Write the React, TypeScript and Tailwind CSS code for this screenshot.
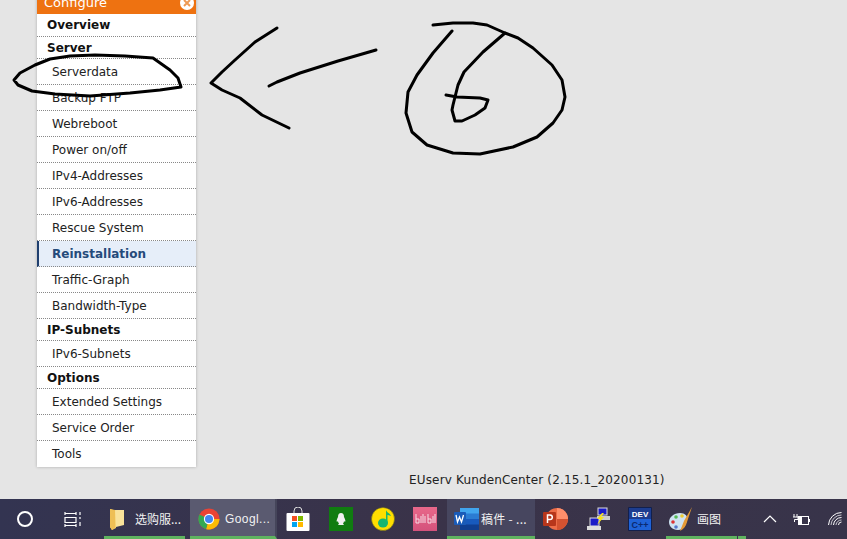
import React from "react";

const font = { fontFamily: '"DejaVu Sans", Verdana, sans-serif' };

function Head({ label, h }: { label: string; h: string }) {
  return (
    <div className={`${h} border-b border-dotted border-[#888] pl-[10px] flex items-center text-[12px] leading-none font-bold text-[#111]`}>
      {label}
    </div>
  );
}

function Item({ label, active, last }: { label: string; active?: boolean; last?: boolean }) {
  return (
    <div
      className={`h-[26px] flex items-center text-[12px] leading-none ${last ? "" : "border-b border-dotted border-[#888]"} ${
        active ? "bg-[#e6eef9] font-bold text-[#254a7a] border-l-2 [border-left-style:solid] border-l-[#1f3f6e] pl-[13px]" : "pl-[15px] text-[#222]"
      }`}
    >
      {label}
    </div>
  );
}

function Sidebar() {
  return (
    <div className="ml-[37px] w-[159px] -mt-[8px] bg-white shadow-[0_0_3px_rgba(0,0,0,0.25)] self-start">
      <div className="h-[22px] bg-[#ee7211] flex items-center justify-between pl-[7px] pr-[2px] text-white text-[13px]">
        <span>Configure</span>
        <span className="w-[14px] h-[14px] rounded-full bg-white text-[#ee7211] flex items-center justify-center">
          <svg width="8" height="8" viewBox="0 0 8 8"><path d="M1 1l6 6M7 1L1 7" stroke="#ee9a55" strokeWidth="2" /></svg>
        </span>
      </div>
      <Head label="Overview" h="h-[23px]" />
      <Head label="Server" h="h-[22px]" />
      <Item label="Serverdata" />
      <Item label="Backup FTP" />
      <Item label="Webreboot" />
      <Item label="Power on/off" />
      <Item label="IPv4-Addresses" />
      <Item label="IPv6-Addresses" />
      <Item label="Rescue System" />
      <Item label="Reinstallation" active />
      <Item label="Traffic-Graph" />
      <Item label="Bandwidth-Type" />
      <Head label="IP-Subnets" h="h-[22px]" />
      <Item label="IPv6-Subnets" />
      <Head label="Options" h="h-[22px]" />
      <Item label="Extended Settings" />
      <Item label="Service Order" />
      <Item label="Tools" last />
    </div>
  );
}

function Drawing() {
  const s = { fill: "none", stroke: "#000", strokeWidth: 3, strokeLinejoin: "round" as const, strokeLinecap: "round" as const };
  return (
    <svg className="absolute left-0 top-0 pointer-events-none" width="847" height="499" viewBox="0 0 847 499">
      <polyline {...s} points="181,87 178,78 170,70 153,58 125,56 95,55 70,56 50,59 35,65 20,73 14,80 18,85 32,91 55,94 90,96 130,93 160,90 181,87" />
      <polyline {...s} points="277,28 255,42 235,60 222,72 211,83 222,90 240,98 262,115 289,128" />
      <polyline {...s} points="269,86 277,82 300,73 338,61 376,50" />
      <polyline {...s} points="433,25 453,23 473,23 487,25 505,33 518,38 533,48 552,65 562,80 565,97 562,110 553,123 537,137 513,147 480,154 453,153 427,145 412,132 406,113 408,92 417,75 433,53 452,31" />
      <polyline {...s} points="505,33 483,52 464,72 458,85 453,105 452,110 455,121 462,121 475,115 485,108 488,100 480,98 457,97 446,95" />
    </svg>
  );
}

function Folder() {
  return (
    <svg width="14" height="21" viewBox="0 0 14 21" className="shrink-0">
      <path d="M0 0l6 2v17l-4 2-2-3z" fill="#f5d06a" />
      <path d="M5 1h9v15l-8 2z" fill="#f9e29a" />
      <path d="M0 0l5 1v18l-3 2-2-3z" fill="#eebf55" />
    </svg>
  );
}

function Chrome() {
  return (
    <svg width="22" height="22" viewBox="0 0 24 24">
      <circle cx="12" cy="12" r="11.5" fill="#ea4335" />
      <path d="M12 12L1.5 7A11.5 11.5 0 0 0 9 23.1z" fill="#34a853" />
      <path d="M12 12h11.4A11.5 11.5 0 0 1 9 23.1z" fill="#fbbc05" />
      <circle cx="12" cy="12" r="5.6" fill="#fff" />
      <circle cx="12" cy="12" r="4.4" fill="#4285f4" />
    </svg>
  );
}

function Store() {
  return (
    <svg width="24" height="24" viewBox="0 0 24 24">
      <path d="M8 7V4a4 4 0 0 1 8 0v3" fill="none" stroke="#ddd" strokeWidth="1" />
      <rect x="0.5" y="6" width="23" height="18" rx="1" fill="#fff" />
      <rect x="6" y="9" width="5" height="5" fill="#f25022" />
      <rect x="12" y="9" width="5" height="5" fill="#7fba00" />
      <rect x="6" y="15" width="5" height="5" fill="#00a4ef" />
      <rect x="12" y="15" width="5" height="5" fill="#ffb900" />
    </svg>
  );
}

function QQ() {
  return (
    <div className="w-[24px] h-[24px] bg-[#107c10] flex items-center justify-center">
      <svg width="10" height="12" viewBox="0 0 10 12">
        <path d="M5 0c2 0 3 1.5 3 4 1 2 2 4 1 5l-1-1c0 1-.5 2-1 2.500L8 12H2l1-1.500C2.500 10 2 9 2 8L1 9C0 8 1 6 2 4c0-2.500 1-4 3-4z" fill="#f0f0f0" />
      </svg>
    </div>
  );
}

function QQMusic() {
  return (
    <svg width="24" height="24" viewBox="0 0 24 24">
      <circle cx="12" cy="12" r="11.500" fill="#ffde00" stroke="#6b6a20" strokeWidth="0.6" />
      <ellipse cx="12" cy="16" rx="5" ry="4.500" fill="#18b56f" />
      <path d="M15 16V3c1 3 4 3 5 6-2-1-3-1-3.500-1V16z" fill="#18b56f" />
    </svg>
  );
}

function Bili() {
  return (
    <div className="w-[24px] h-[24px] bg-gradient-to-b from-[#e8688a] to-[#d4527c] flex items-center justify-center overflow-hidden">
      <svg width="22" height="12" viewBox="0 0 22 12" fill="none" stroke="#f7dce4" strokeWidth="1">
        <path d="M2 1v9h3V6H2M7 3v7M9 1v9M11 3v7M14 1v9h3V6h-3M19 3v7M21 1v9" />
      </svg>
    </div>
  );
}

function Word() {
  return (
    <svg width="25" height="22" viewBox="0 0 25 22" className="shrink-0">
      <rect x="6" y="0" width="19" height="6" fill="#41a5ee" />
      <rect x="6" y="5.500" width="19" height="6" fill="#2b7cd3" />
      <rect x="6" y="11" width="19" height="6" fill="#185abd" />
      <rect x="6" y="16.500" width="19" height="5.500" fill="#103f91" />
      <rect x="0" y="4" width="12" height="13" rx="1" fill="#1a5bb8" />
      <path d="M2 7l1.500 7 2-5 2 5L9.500 7" fill="none" stroke="#fff" strokeWidth="1.300" />
    </svg>
  );
}

function Ppt() {
  return (
    <svg width="25" height="24" viewBox="0 0 25 24">
      <circle cx="14" cy="12" r="11" fill="#ed6c47" />
      <path d="M14 1a11 11 0 0 1 11 11H14z" fill="#ff8f6b" />
      <path d="M14 12h11a11 11 0 0 1-11 11z" fill="#d35230" />
      <rect x="0" y="5" width="13" height="14" rx="1" fill="#b7361b" />
      <path d="M4.500 16V8h2.500a2.200 2.200 0 0 1 0 4.600H4.500" fill="none" stroke="#fff" strokeWidth="1.500" />
    </svg>
  );
}

function Net() {
  return (
    <svg width="24" height="24" viewBox="0 0 24 24">
      <rect x="11" y="1" width="9" height="7" fill="#1a1ac8" stroke="#ddd" />
      <rect x="10" y="9" width="13" height="4" fill="#ccc" />
      <rect x="3" y="11" width="9" height="8" fill="#1a1ac8" stroke="#ddd" />
      <rect x="0" y="19" width="14" height="4" fill="#ddd" />
      <path d="M15 6l-5 6h3l-3 6 7-8h-3l3-4z" fill="#f5e11e" />
    </svg>
  );
}

function Dev() {
  return (
    <svg width="24" height="24" viewBox="0 0 24 24">
      <rect width="24" height="24" rx="1" fill="#12204d" />
      <rect x="1" y="1" width="22" height="11" fill="#1d3d8f" />
      <rect x="1" y="12" width="22" height="11" fill="#1f63d8" />
      <text x="12" y="10" textAnchor="middle" fontSize="8" fontWeight="700" fill="#fff" style={{ fontFamily: '"Liberation Sans", sans-serif' }}>DEV</text>
      <text x="12" y="21" textAnchor="middle" fontSize="9" fontWeight="700" fill="#0b2a70" style={{ fontFamily: '"Liberation Sans", sans-serif' }}>C++</text>
    </svg>
  );
}

function Paint() {
  return (
    <svg width="24" height="24" viewBox="0 0 24 24" className="shrink-0">
      <path d="M0 15c0-5 5-9 11-9 5 0 8 3 7 7s-3 10-9 10-9-4-9-8z" fill="#cfe3f2" />
      <circle cx="4" cy="15" r="1.800" fill="#d33" />
      <circle cx="7" cy="10" r="1.800" fill="#5b5" />
      <circle cx="13" cy="9" r="1.800" fill="#ec3" />
      <circle cx="7" cy="20" r="1.800" fill="#57c" />
      <path d="M23 0L15 14l-4 10c4-2 6-5 7-9z" fill="#e59a35" />
    </svg>
  );
}

function Chevron() {
  return (
    <svg width="14" height="8" viewBox="0 0 14 8"><path d="M1 7l6-6 6 6" fill="none" stroke="#fff" strokeWidth="1.200" /></svg>
  );
}

function Battery() {
  return (
    <svg width="17" height="13" viewBox="0 0 17 13" fill="none" stroke="#fff" strokeWidth="1">
      <rect x="5.500" y="3.500" width="10" height="8" />
      <rect x="16" y="6" width="1" height="3" fill="#fff" stroke="none" />
      <rect x="6" y="4" width="3" height="7" fill="#fff" stroke="none" />
      <path d="M1 1v3M4 1v3M0 4h5v2.500H1.500V9" />
    </svg>
  );
}

function Wifi() {
  return (
    <svg width="14" height="14" viewBox="0 0 14 14" fill="none" stroke="#fff" strokeWidth="1">
      <path d="M0.500 13a13 13 0 0 1 13-12.500" />
      <path d="M3 13a10.500 10.500 0 0 1 10.500-10" opacity="0.7" />
      <path d="M5.500 13a8 8 0 0 1 8-7.500" />
      <path d="M8 13a5.500 5.500 0 0 1 5.500-5" opacity="0.7" />
      <path d="M10.500 13a3 3 0 0 1 3-3" />
    </svg>
  );
}

function Taskbar() {
  const label = "text-[12px] leading-none text-[#f2f2f2] whitespace-nowrap";
  return (
    <div
      className="h-[40px] flex items-stretch text-white bg-gradient-to-r from-[#333451] via-[#3a3349] to-[#38344a]"
      style={{ fontFamily: '"Noto Sans CJK SC", "Liberation Sans", sans-serif' }}
    >
      <div className="w-[50px] flex items-center justify-center">
        <div className="w-[16px] h-[16px] rounded-full border-2 border-white" />
      </div>
      <div className="w-[44px] flex items-center justify-center">
        <svg width="17" height="15" viewBox="0 0 17 15" fill="none" stroke="#fff" strokeWidth="1.200">
          <path d="M1 0v3M12 0v3M1 1.500h11M1 5.500h11v5H1zM1 13.500h11M1 12v3M12 12v3M16 0v3M16 5v2M16 10v4" />
        </svg>
      </div>
      <div className="ml-[10px] w-[81px] flex items-center gap-[11px] pl-[6px] border-b-[3px] border-b-[#5fb35f] pt-[3px]">
        <Folder />
        <span className={label}>选购服...</span>
      </div>
      <div className="ml-[5px] w-[87px] flex items-center gap-[5px] pl-[8px] bg-[#5a5a70] border-b-[3px] border-b-[#5fb35f] border-r-2 border-r-[#45455a] pt-[3px]">
        <Chrome />
        <span className={`${label} font-['Liberation_Sans'] tracking-[0.4px]`}>Googl...</span>
      </div>
      <div className="w-[9px]" />
      <div className="w-[24px] flex items-center justify-center"><Store /></div>
      <div className="w-[24px] flex items-center ml-[19px]"><QQ /></div>
      <div className="w-[24px] flex items-center ml-[18px]"><QQMusic /></div>
      <div className="w-[24px] flex items-center ml-[18px]"><Bili /></div>
      <div className="ml-[10px] w-[88px] flex items-center gap-[2px] pl-[7px] bg-[#47465f] border-b-[3px] border-b-[#5fb35f] pt-[3px]">
        <Word />
        <span className={`${label} tracking-[0.3px]`}>稿件 - ...</span>
      </div>
      <div className="w-[25px] flex items-center ml-[8px]"><Ppt /></div>
      <div className="w-[24px] flex items-center ml-[19px]"><Net /></div>
      <div className="w-[24px] flex items-center ml-[17px]"><Dev /></div>
      <div className="ml-[14px] w-[71px] flex items-center gap-[4px] pl-[3px] pt-[3px] border-b-[3px] border-b-[#5fb35f]">
        <Paint />
        <span className={label}>画图</span>
      </div>
      <div className="w-[8px] border-b-[3px] border-b-[#5fb35f] ml-[1px]" />
      <div className="flex-1 flex items-center">
        <span className="ml-[17px] flex"><Chevron /></span>
        <span className="ml-[16px] flex"><Battery /></span>
        <span className="ml-[18px] flex"><Wifi /></span>
      </div>
    </div>
  );
}

export default function App() {
  return (
    <div className="w-[847px] h-[539px] overflow-hidden flex flex-col bg-[#e5e5e5]" style={font}>
      <div className="relative flex-1 flex min-h-0">
        <Sidebar />
        <div className="flex-1 flex items-end pb-[13px] pl-[213px] text-[12px] leading-none text-[#222] whitespace-nowrap tracking-[0.16px]">
          EUserv KundenCenter (2.15.1_20200131)
        </div>
        <Drawing />
      </div>
      <Taskbar />
    </div>
  );
}
